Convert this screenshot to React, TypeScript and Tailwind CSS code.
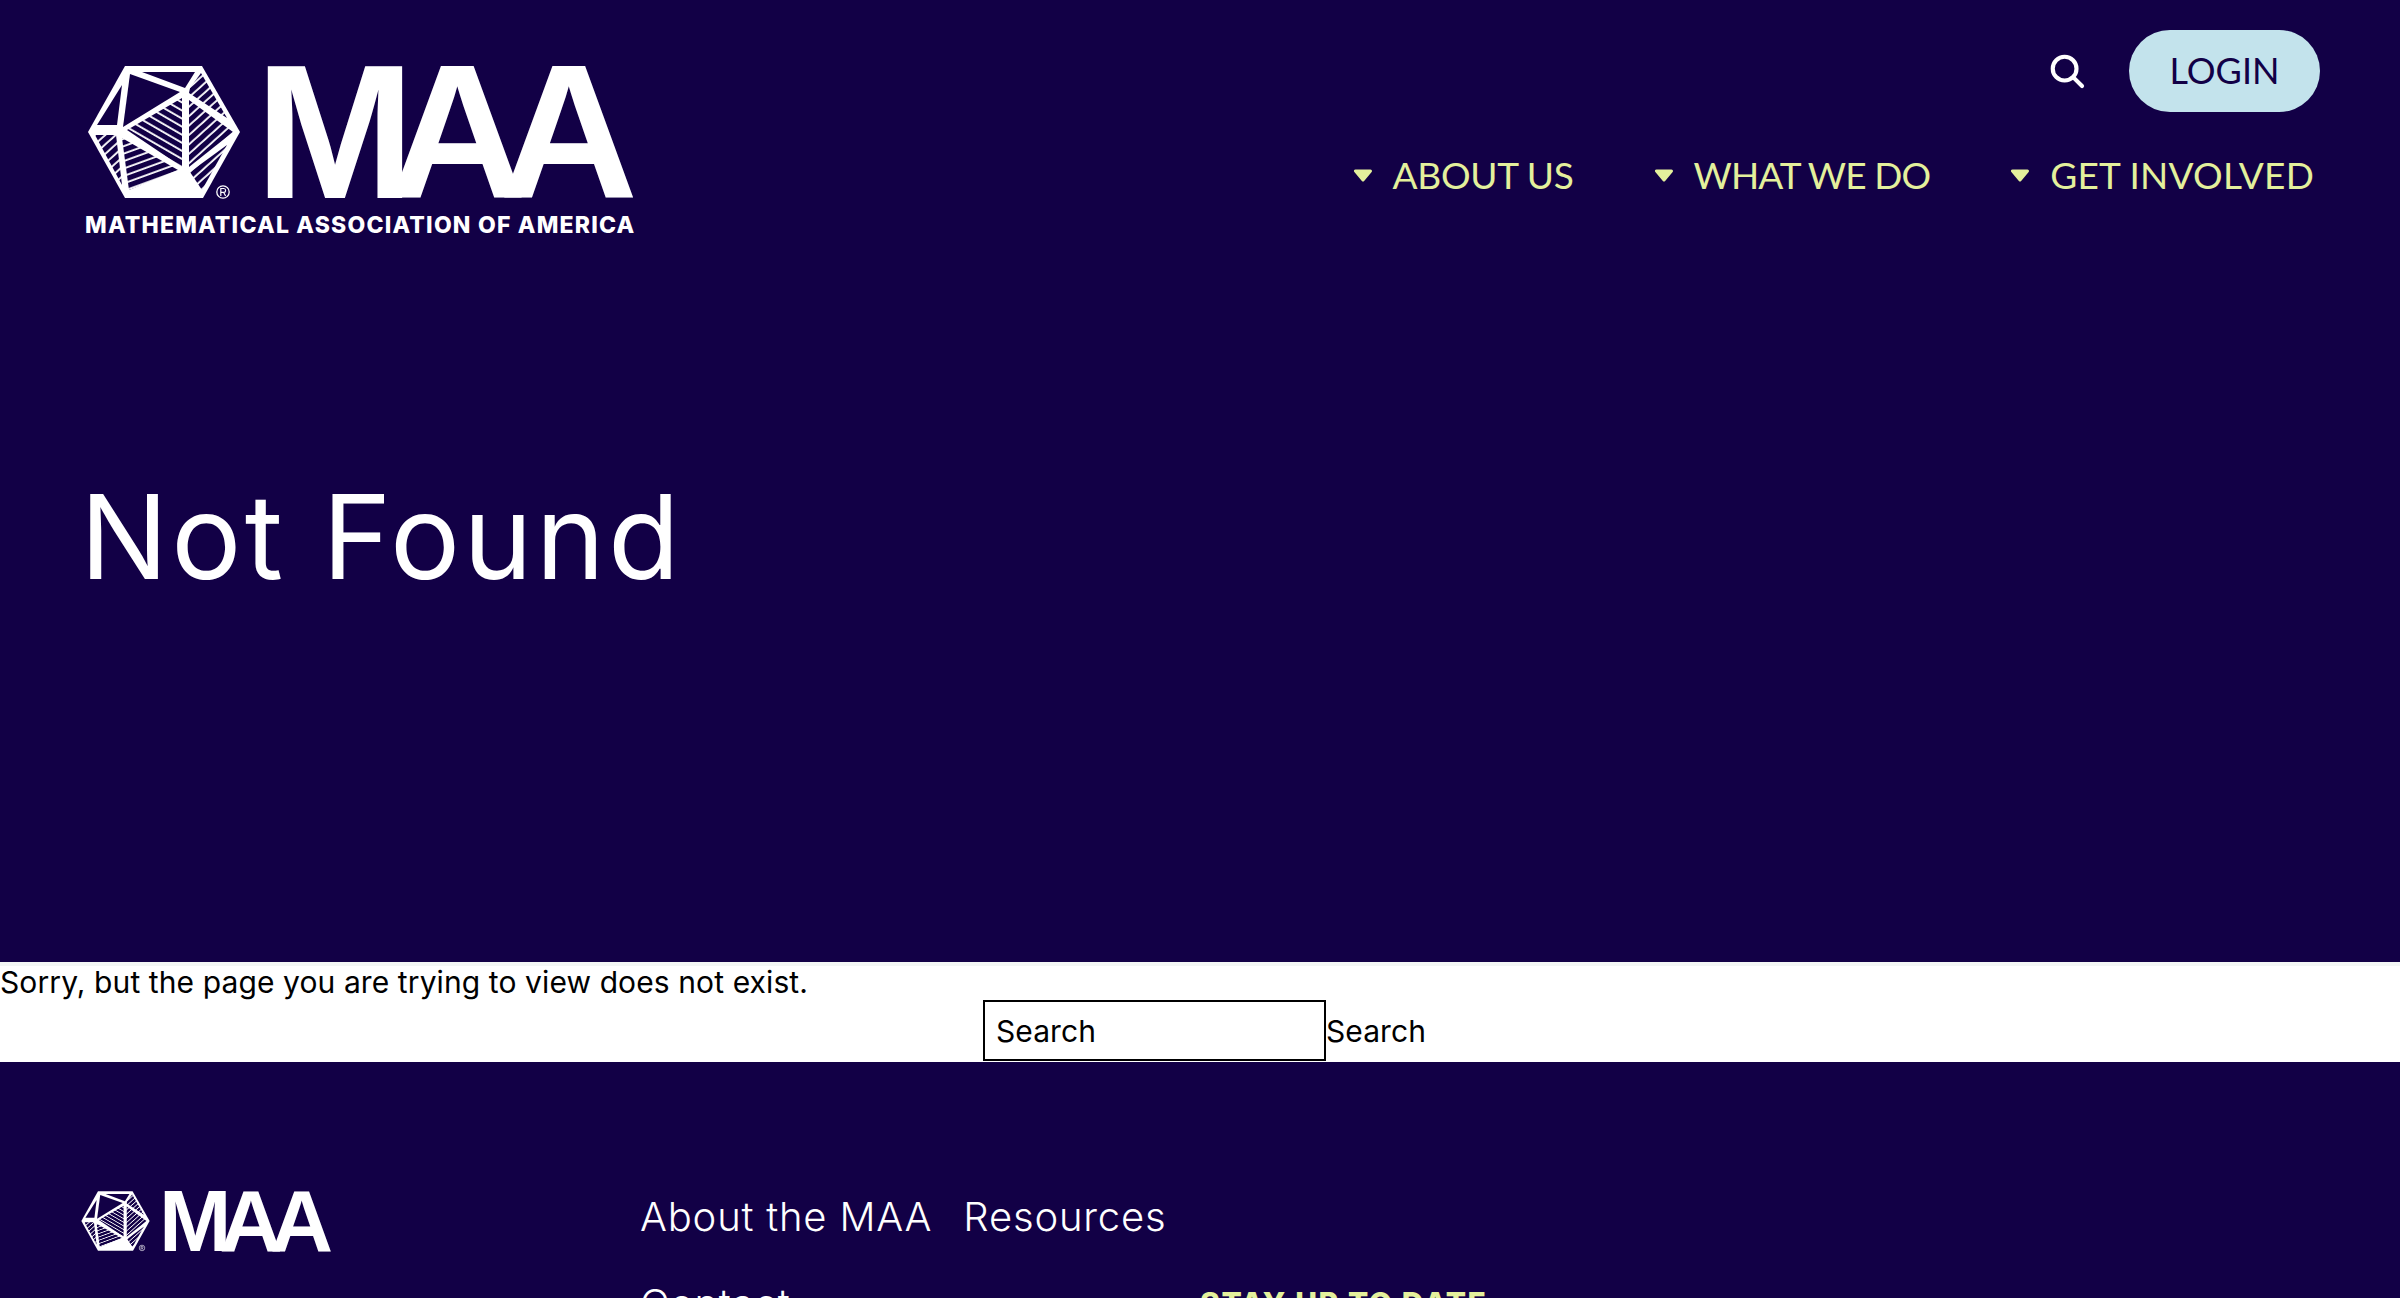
const Poly = ({ small = false }: { small?: boolean }) => {
  const a = small ? "ps1" : "pl1";
  const b = small ? "ps2" : "pl2";
  const c = small ? "ps3" : "pl3";
  const d = "#120046";
  return (
    <svg viewBox="15 8 158 138" className={small ? "h-[62px] w-[71px] shrink-0" : "h-[138px] w-[158px] shrink-0"}>
      <defs>
        <pattern id={a} width="7" height="7" patternUnits="userSpaceOnUse" patternTransform="rotate(30)">
          <rect width="7" height="5.4" fill={d} />
          <rect y="5.4" width="7" height="1.6" fill="#fff" />
        </pattern>
        <pattern id={b} width="7" height="7" patternUnits="userSpaceOnUse" patternTransform="rotate(-42)">
          <rect width="7" height="5.4" fill={d} />
          <rect y="5.4" width="7" height="1.6" fill="#fff" />
        </pattern>
        <pattern id={c} width="7" height="7" patternUnits="userSpaceOnUse" patternTransform="rotate(-20)">
          <rect width="7" height="5.4" fill={d} />
          <rect y="5.4" width="7" height="1.6" fill="#fff" />
        </pattern>
      </defs>
      <path d="M18 77L55 11H132L170 77L133 143H55Z" fill="#fff" />
      <path d="M72 17H125L115 33Z" fill={d} />
      <path d="M60 19L110 37L53 72Z" fill={d} />
      <path d="M52 30L47 70H27Z" fill={d} />
      <path d="M112 43V112L57 75Z" fill={`url(#${a})`} />
      <path d="M119 45V112L163 77Z" fill={`url(#${b})`} />
      <path d="M120 33L131 18L157 63L119 38Z" fill={`url(#${b})`} />
      <path d="M52 83L108 115L59 135Z" fill={`url(#${c})`} />
      <path d="M25 80H46L52 130Z" fill={`url(#${b})`} />
      <path d="M120 117L157 90L132 135Z" fill={`url(#${b})`} />
      <circle cx="153" cy="137" r="6.2" fill="none" stroke="#fff" strokeWidth="1.3" />
      <path d="M150.8 141V133.5H153.8C156.2 133.5 156.2 137.3 153.8 137.3H150.8M153.6 137.3L155.6 141" fill="none" stroke="#fff" strokeWidth="1.2" />
    </svg>
  );
};

const Caret = () => (
  <svg viewBox="0 0 20 13" className="h-[13px] w-[20px] shrink-0" fill="#e4f09c" stroke="#e4f09c" strokeWidth="3" strokeLinejoin="round">
    <path d="M2.5 2H17.5L10 11Z" />
  </svg>
);

const NavItem = ({ label, track }: { label: string; track: string }) => (
  <div className="flex items-center gap-[20px]">
    <Caret />
    <span className={track}>{label}</span>
  </div>
);

export default function App() {
  return (
    <div className="h-[1298px] overflow-hidden bg-[#120046] font-['Inter',sans-serif]">
      <header className="flex h-[270px] items-start justify-between pl-[85px] pr-[80px] pt-[30px]">
        <div className="pt-[33px]">
          <div className="flex items-center">
            <Poly />
            <span className="ml-[12px] font-['Liberation_Sans',sans-serif] text-[192px] font-bold leading-[134px] tracking-[-27px] text-white">MAA</span>
          </div>
          <div className="mt-[10px] whitespace-nowrap text-[23px] font-extrabold leading-[28px] tracking-[1.2px] text-white">MATHEMATICAL ASSOCIATION OF AMERICA</div>
        </div>
        <div className="flex flex-col items-end">
          <div className="flex items-center gap-[43px]">
            <svg viewBox="0 0 24 24" className="h-[38px] w-[38px]" fill="none" stroke="#fff" strokeWidth="2.6" strokeLinecap="round">
              <circle cx="10.5" cy="10.5" r="7.5" />
              <path d="M16 16L21.5 21.5" />
            </svg>
            <button className="h-[82px] w-[191px] rounded-[41px] bg-[#c3e3ec] pb-[2px] font-['Lato',sans-serif] text-[36px] text-[#120046]">LOGIN</button>
          </div>
          <nav className="mt-[40px] flex gap-[80px] pr-[6px] font-['Lato',sans-serif] text-[37px] leading-[46px] text-[#e4f09c]">
            <NavItem label="ABOUT US" track="tracking-[-0.3px]" />
            <NavItem label="WHAT WE DO" track="tracking-[-0.9px]" />
            <NavItem label="GET INVOLVED" track="tracking-[0.2px]" />
          </nav>
        </div>
      </header>
      <div className="flex h-[692px] items-start pl-[80px] pt-[202px]">
        <h1 className="text-[117px] font-normal leading-[130px] tracking-[3.2px] text-white">Not Found</h1>
      </div>
      <main className="h-[100px] border-t-[4px] border-[#f3f6f5] bg-white text-[30px] leading-[32px] tracking-[0.1px] text-black">
        <p>Sorry, but the page you are trying to view does not exist.</p>
        <form className="flex justify-center pl-[9px] pt-[2px]">
          <input
            placeholder="Search"
            className="h-[61px] w-[343px] border-2 border-black pl-[11px] placeholder:text-black"
          />
          <button type="button" className="flex items-center">Search</button>
        </form>
      </main>
      <footer className="flex pl-[80px] pt-[128px] text-white">
        <div className="flex w-[560px] items-center self-start">
          <Poly small />
          <span className="ml-[8px] font-['Liberation_Sans',sans-serif] text-[87px] font-bold leading-[60px] tracking-[-12px]">MAA</span>
        </div>
        <div className="w-[560px] pt-[3px] text-[40px] font-light leading-[48px] tracking-[0.8px]">
          <div className="flex gap-[31px]"><span>About the MAA</span><span>Resources</span></div>
          <div className="mt-[39px]">Contact</div>
        </div>
        <div className="pt-[96px] text-[30px] font-extrabold leading-[34px] tracking-[1.6px] text-[#e4f09c]">STAY UP TO DATE</div>
      </footer>
    </div>
  );
}
